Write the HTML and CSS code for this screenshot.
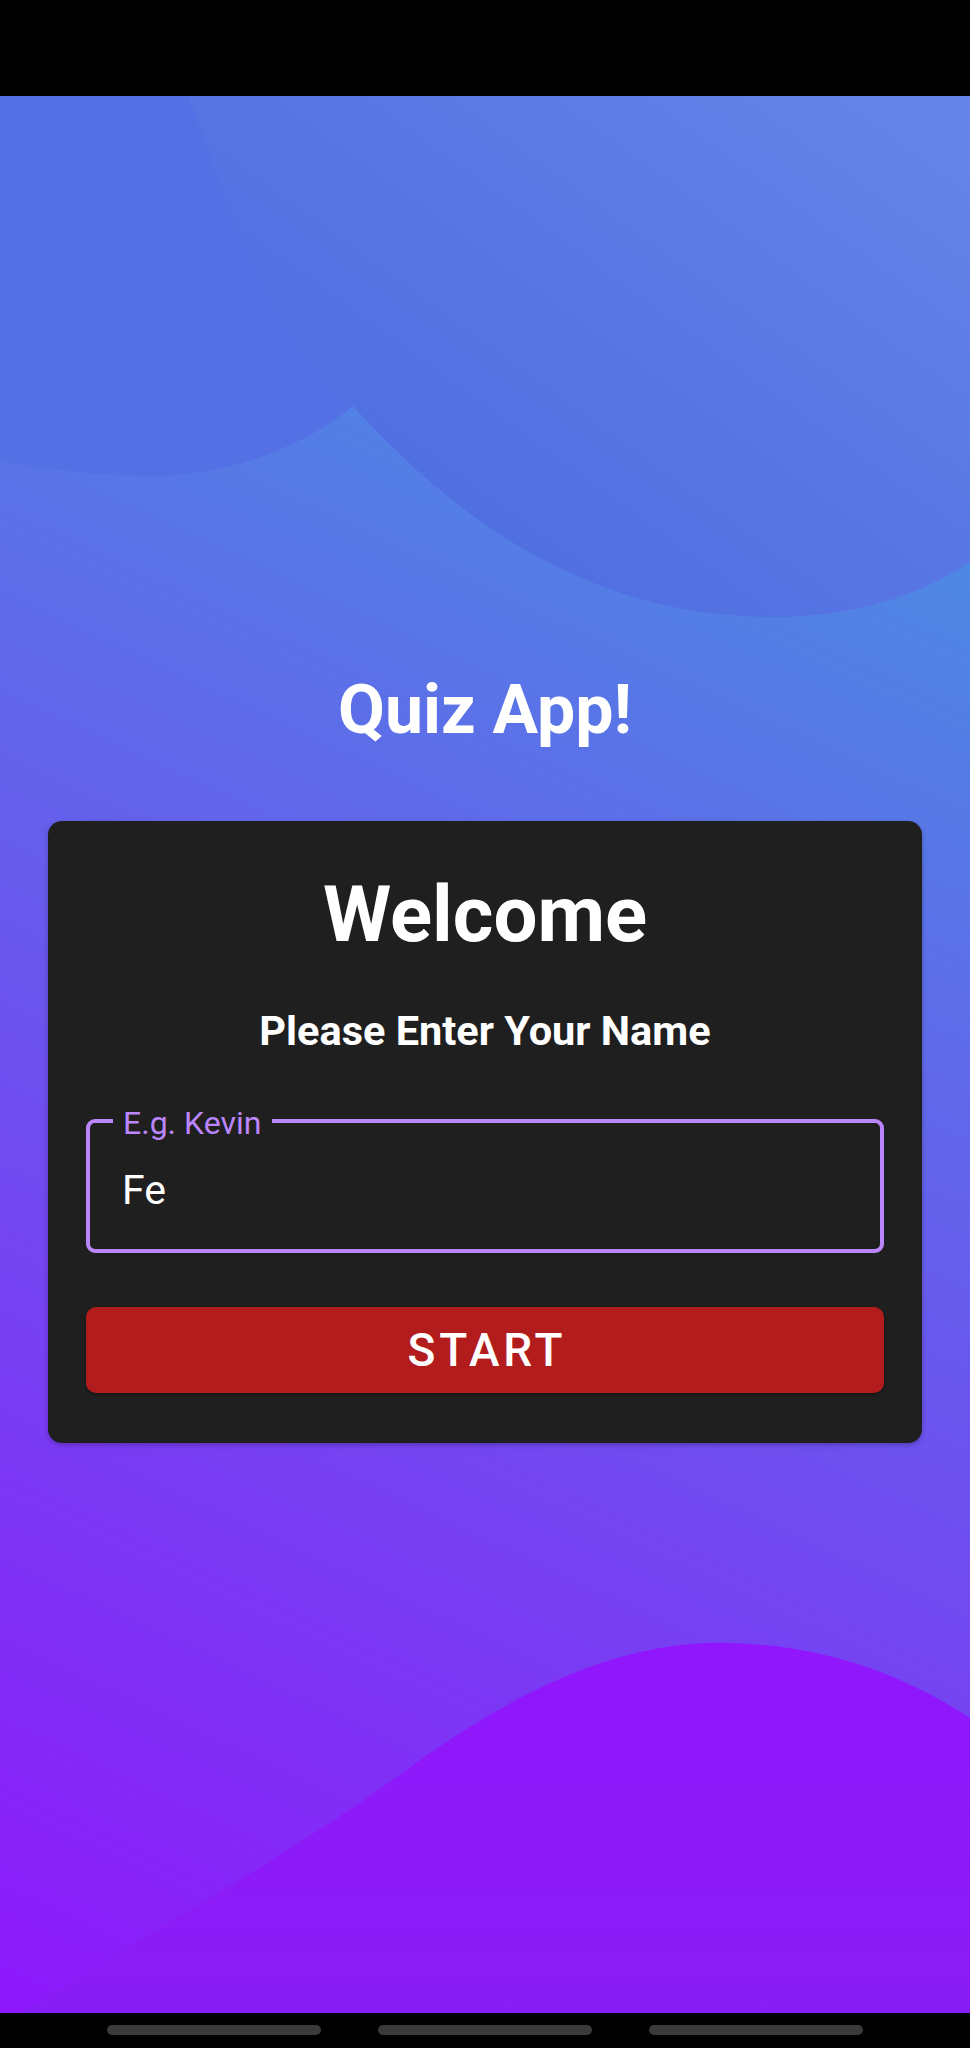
FILE: index.html
```html
<!DOCTYPE html>
<html lang="en">
<head>
<meta charset="utf-8">
<title>Quiz App</title>
<link rel="stylesheet" href="styles.css">
</head>
<body>
<div class="screen">
  <div class="status-bar"></div>
  <main class="app">
    <svg class="bg-shapes" viewBox="0 96 970 1917" preserveAspectRatio="none" aria-hidden="true">
      <defs>
        <linearGradient id="circleFill" gradientUnits="userSpaceOnUse" x1="900" y1="96" x2="520" y2="620">
          <stop offset="0" stop-color="#6683e8"/>
          <stop offset="1" stop-color="#4e6de0"/>
        </linearGradient>
        <linearGradient id="waveFill" gradientUnits="userSpaceOnUse" x1="0" y1="1640" x2="0" y2="2013">
          <stop offset="0" stop-color="#9116fd"/>
          <stop offset="1" stop-color="#891df5"/>
        </linearGradient>
      </defs>
      <path d="M0,96 H420 V330 C400,380 380,395 353,406 C300,450 220,478 140,476 C80,474 30,466 0,461 Z" fill="#5370e5"/>
      <path d="M189,96 C240,250 290,340 353,406 C430,490 560,612 761,617 C850,619 920,596 970,562 V96 Z" fill="url(#circleFill)"/>
      <path d="M20,2013 C120,1950 300,1850 420,1760 C520,1690 620,1640 730,1643 C820,1645 900,1672 970,1718 V2013 Z" fill="url(#waveFill)"/>
    </svg>
    <div class="content">
      <h1 class="app-title">Quiz App!</h1>
      <section class="card">
        <h2 class="card-title">Welcome</h2>
        <p class="card-subtitle">Please Enter Your Name</p>
        <div class="field">
          <label class="field-label" for="name">E.g. Kevin</label>
          <input id="name" class="field-input" type="text" value="Fe">
        </div>
        <button class="start-btn" type="button">START</button>
      </section>
    </div>
  </main>
  <nav class="nav-bar">
    <span class="nav-pill"></span>
    <span class="nav-pill"></span>
    <span class="nav-pill"></span>
  </nav>
</div>
</body>
</html>
```

FILE: styles.css
```css
* {
  box-sizing: border-box;
}

html, body {
  margin: 0;
  padding: 0;
  background: #000;
}

body {
  font-family: Roboto, "Noto Sans", "Liberation Sans", sans-serif;
  color: #fff;
}

.screen {
  width: 970px;
  height: 2048px;
  display: flex;
  flex-direction: column;
}

.status-bar {
  height: 96px;
  background: #000;
  flex: none;
}

.app {
  position: relative;
  height: 1917px;
  flex: none;
  overflow: hidden;
  background: linear-gradient(25deg, #8e17fb 0%, #3ea4dd 100%);
}

.bg-shapes {
  position: absolute;
  inset: 0;
  width: 100%;
  height: 100%;
  display: block;
}

.content {
  position: relative;
  padding-top: 575px;
  display: flex;
  flex-direction: column;
  align-items: center;
}

.app-title {
  margin: 0;
  font-size: 68px;
  line-height: 79px;
  font-weight: 700;
  color: #fff;
}

.card {
  margin-top: 71px;
  width: 874px;
  padding: 47px 38px 50px;
  background: #1f1f1f;
  border-radius: 14px;
  box-shadow: 0 2px 5px rgba(0, 0, 0, 0.25);
  display: flex;
  flex-direction: column;
}

.card-title {
  margin: 0;
  text-align: center;
  font-size: 78px;
  line-height: 94px;
  font-weight: 700;
}

.card-subtitle {
  margin: 45px 0 0;
  text-align: center;
  font-size: 41.5px;
  line-height: 48px;
  font-weight: 700;
}

.field {
  position: relative;
  margin-top: 64px;
  height: 134px;
  border: 4px solid #bb86fc;
  border-radius: 9px;
  display: flex;
  align-items: center;
  padding: 8px 20px 0 32px;
}

.field-label {
  position: absolute;
  left: 23px;
  top: -18px;
  padding: 0 11px 0 10px;
  background: #1f1f1f;
  color: #bb86fc;
  font-size: 32px;
  line-height: 36px;
}

.field-input {
  width: 100%;
  padding: 0;
  border: none;
  outline: none;
  background: transparent;
  color: #fff;
  font-family: Roboto, "Noto Sans", sans-serif;
  font-size: 41px;
}

.start-btn {
  margin-top: 54px;
  height: 86px;
  width: 100%;
  border: none;
  border-radius: 10px;
  background: #b31c1c;
  color: #fff;
  font-family: Roboto, "Noto Sans", sans-serif;
  font-weight: 500;
  font-size: 46px;
  letter-spacing: 3.8px;
  padding: 0 0 0 3.8px;
  box-shadow: 0 2px 3px rgba(0, 0, 0, 0.3);
}

.nav-bar {
  height: 35px;
  flex: none;
  background: #000;
  display: flex;
  justify-content: center;
  align-items: flex-start;
  gap: 57px;
  padding-top: 12px;
}

.nav-pill {
  width: 214px;
  height: 10px;
  border-radius: 5px;
  background: #3b3b3b;
}
```
